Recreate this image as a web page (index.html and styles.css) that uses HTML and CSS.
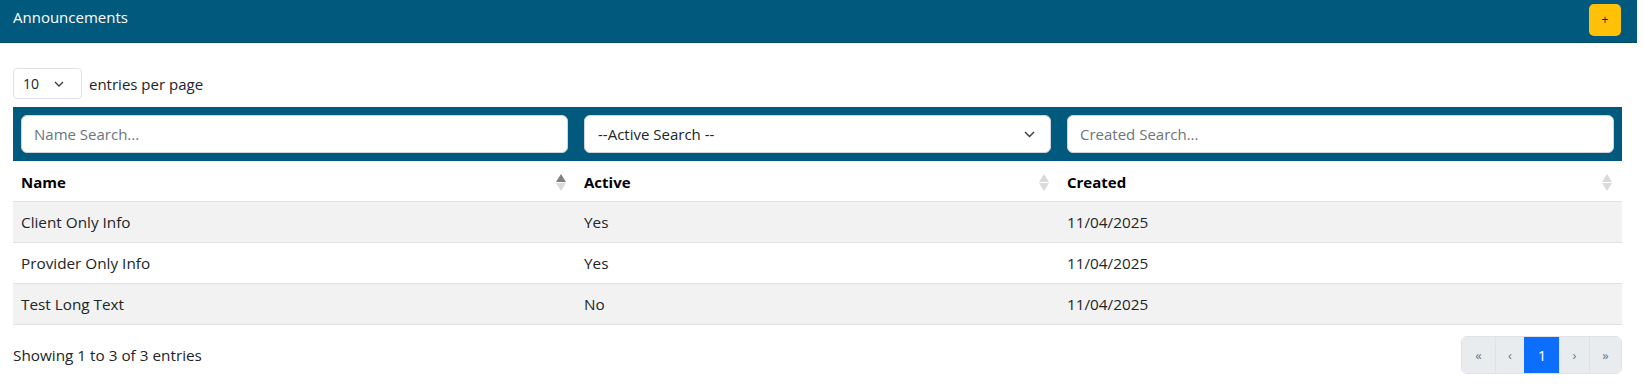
FILE: index.html
```html
<!DOCTYPE html>
<html lang="en">
<head>
<meta charset="utf-8">
<title>Announcements</title>
<link rel="stylesheet" href="styles.css">
</head>
<body>
<div class="page">
  <header class="topbar">
    <h1 class="title">Announcements</h1>
    <button class="add-btn" type="button">+</button>
  </header>
  <main class="content">
    <div class="length">
      <div class="length-select">
        <span>10</span>
        <svg class="chev" width="10" height="6" viewBox="0 0 10 6"><path d="M1 1l4 4 4-4" fill="none" stroke="#343a40" stroke-width="1.3"/></svg>
      </div>
      <span class="length-label">entries per page</span>
    </div>
    <table class="grid">
      <colgroup>
        <col class="c-name">
        <col class="c-active">
        <col class="c-created">
      </colgroup>
      <thead>
        <tr class="filters">
          <th><input class="field" type="text" placeholder="Name Search..."></th>
          <th>
            <div class="field select-field">
              <span>--Active Search --</span>
              <svg class="chev" width="11" height="7" viewBox="0 0 11 7"><path d="M1 1l4.5 4.5L10 1" fill="none" stroke="#343a40" stroke-width="1.4"/></svg>
            </div>
          </th>
          <th><input class="field" type="text" placeholder="Created Search..."></th>
        </tr>
        <tr class="heads">
          <th><div class="th-inner"><span>Name</span><span class="sort asc"></span></div></th>
          <th><div class="th-inner"><span>Active</span><span class="sort"></span></div></th>
          <th><div class="th-inner"><span>Created</span><span class="sort"></span></div></th>
        </tr>
      </thead>
      <tbody>
        <tr><td>Client Only Info</td><td>Yes</td><td>11/04/2025</td></tr>
        <tr><td>Provider Only Info</td><td>Yes</td><td>11/04/2025</td></tr>
        <tr><td>Test Long Text</td><td>No</td><td>11/04/2025</td></tr>
      </tbody>
    </table>
    <div class="footer">
      <div class="info">Showing 1 to 3 of 3 entries</div>
      <nav class="pager">
        <span class="pg w-first">«</span>
        <span class="pg w-prev">‹</span>
        <span class="pg w-cur active">1</span>
        <span class="pg w-next">›</span>
        <span class="pg w-last">»</span>
      </nav>
    </div>
  </main>
</div>
</body>
</html>
```

FILE: styles.css
```css
* { box-sizing: border-box; }

body {
  margin: 0;
  font-family: "Open Sans", "Noto Sans", sans-serif;
  color: #212529;
  background: #fff;
}

.page {
  width: 1637px;
}

.topbar {
  height: 43px;
  background: #02597e;
  border-bottom: 1px solid #024a69;
  display: flex;
  justify-content: space-between;
  align-items: flex-start;
  padding: 4px 16px 0 13px;
}

.title {
  margin: 0;
  padding-top: 3px;
  font-size: 15px;
  line-height: 20px;
  font-weight: 400;
  color: #fff;
}

.add-btn {
  width: 32px;
  height: 32px;
  padding: 0;
  border: 0;
  border-radius: 5px;
  background: #ffc107;
  color: #1b1b1b;
  font-family: "Open Sans", sans-serif;
  font-size: 12px;
  line-height: 1;
  display: flex;
  align-items: center;
  justify-content: center;
}

.content {
  padding: 0 15px 0 13px;
}

.length {
  display: flex;
  align-items: center;
  gap: 7px;
  margin-top: 25px;
  margin-bottom: 8px;
  height: 31px;
}

.length-select {
  width: 69px;
  height: 31px;
  border: 1px solid #dee2e6;
  border-radius: 4px;
  display: flex;
  align-items: center;
  justify-content: space-between;
  padding: 0 17px 0 9px;
  font-size: 14px;
  color: #212529;
}

.length-label {
  font-size: 15px;
  color: #212529;
}

.grid {
  width: 100%;
  border-collapse: collapse;
  table-layout: fixed;
}

.c-name { width: 563px; }
.c-active { width: 483px; }
.c-created { width: 563px; }

.filters th {
  background: #02597e;
  padding: 8px;
  font-weight: 400;
}

.field {
  display: block;
  width: 100%;
  height: 38px;
  border: 1px solid #ced4da;
  border-radius: 6px;
  background: #fff;
  padding: 0 12px;
  font-family: "Open Sans", sans-serif;
  font-size: 15px;
  color: #212529;
  outline: none;
}

.field::placeholder {
  color: #6c757d;
}

.select-field {
  display: flex;
  align-items: center;
  justify-content: space-between;
  padding: 0 15px 0 13px;
  text-align: left;
}

.heads th {
  text-align: left;
  font-weight: 700;
  font-size: 15px;
  line-height: 24px;
  padding: 9px 8px 7px;
  color: #000;
  border-bottom: 1px solid #dee2e6;
}

.th-inner {
  display: flex;
  align-items: center;
  justify-content: space-between;
}

.sort {
  display: flex;
  flex-direction: column;
  gap: 1px;
  margin-right: 2px;
}

.sort::before,
.sort::after {
  content: "";
  width: 0;
  height: 0;
  border-left: 5px solid transparent;
  border-right: 5px solid transparent;
}

.sort::before { border-bottom: 8px solid #dadada; }
.sort::after { border-top: 8px solid #dadada; }
.sort.asc::before { border-bottom-color: #808080; }

tbody td {
  padding: 8px;
  font-size: 15.3px;
  line-height: 24px;
  color: #212529;
  border-bottom: 1px solid #dee2e6;
}

tbody tr:nth-child(odd) td {
  background: #f2f2f2;
}

.footer {
  display: flex;
  justify-content: space-between;
  align-items: center;
  margin-top: 11px;
}

.info {
  font-size: 15.3px;
  color: #212529;
}

.pager {
  display: flex;
  border: 1px solid #dee2e6;
  border-radius: 6px;
  overflow: hidden;
  height: 38px;
}

.pg {
  display: flex;
  align-items: center;
  justify-content: center;
  height: 36px;
  background: #e9ecef;
  color: #6c757d;
  font-size: 13px;
  border-left: 1px solid #dee2e6;
}

.pg:first-child { border-left: 0; }

.w-first { width: 33px; }
.w-prev { width: 29px; }
.w-cur { width: 35px; }
.w-next { width: 30px; }
.w-last { width: 32px; }

.pg.active {
  background: #0d6efd;
  color: #fff;
  font-size: 15px;
  border-left-color: #0d6efd;
}
```
